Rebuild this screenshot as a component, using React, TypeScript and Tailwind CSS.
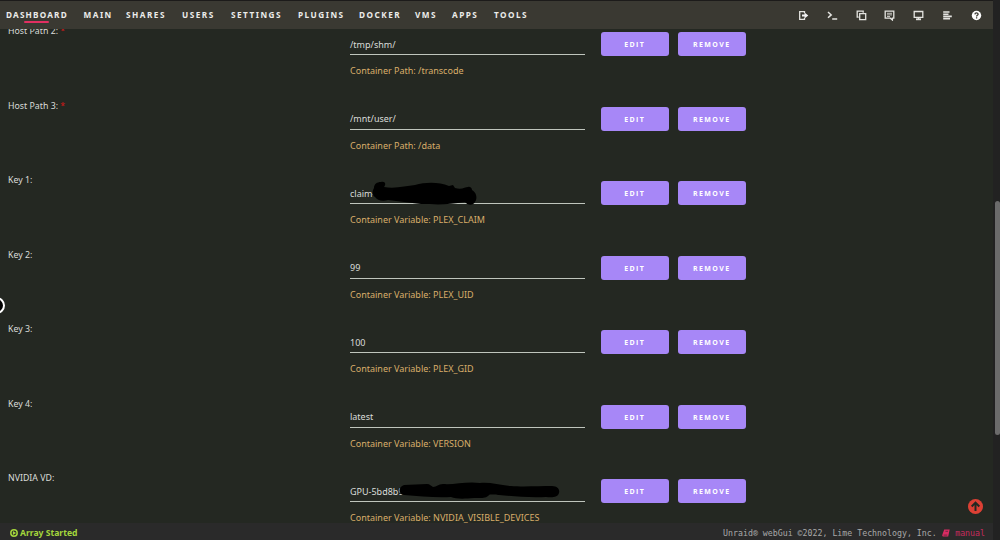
import { ReactNode } from "react";

type Field = {
  label: string;
  required?: boolean;
  value: string;
  help: string;
  redaction?: ReactNode;
};

const tabs = [
  { name: "DASHBOARD", width: "w-[77.5px] tracking-[1.2px]" },
  { name: "MAIN", width: "w-[42.5px]" },
  { name: "SHARES", width: "w-[56px]" },
  { name: "USERS", width: "w-[49px]" },
  { name: "SETTINGS", width: "w-[67px]" },
  { name: "PLUGINS", width: "w-[61px]" },
  { name: "DOCKER", width: "w-[56px]" },
  { name: "VMS", width: "w-[37px]" },
  { name: "APPS", width: "w-[42px]" },
  { name: "TOOLS", width: "w-[40px]" },
];

const fields: Field[] = [
  { label: "Host Path 2:", required: true, value: "/tmp/shm/", help: "Container Path: /transcode" },
  { label: "Host Path 3:", required: true, value: "/mnt/user/", help: "Container Path: /data" },
  {
    label: "Key 1:",
    value: "claim-",
    help: "Container Variable: PLEX_CLAIM",
    redaction: (
      <svg className="absolute -top-[5px] left-[22px]" width="106" height="26" viewBox="0 0 106 26">
        <path
          d="M2 7C2 3 5 1 9 1C14 0 14 4 12 6C23 8 34 5 43 4C54 1 67 1 77 5L81 4L83 7C90 9 93 6 96 6C99 5 100 8 100 9C104 11 106 17 103 21C101 25 95 24 93 21C80 23 67 24 58 23L49 23C37 22 27 20 16 19C10 21 5 19 3 16C0 14 0 10 2 7Z"
          fill="#000"
        />
      </svg>
    ),
  },
  { label: "Key 2:", value: "99", help: "Container Variable: PLEX_UID" },
  { label: "Key 3:", value: "100", help: "Container Variable: PLEX_GID" },
  { label: "Key 4:", value: "latest", help: "Container Variable: VERSION" },
  {
    label: "NVIDIA VD:",
    value: "GPU-5bd8b9",
    help: "Container Variable: NVIDIA_VISIBLE_DEVICES",
    redaction: (
      <svg className="absolute -top-[2px] left-[49px]" width="162" height="20" viewBox="0 0 162 20">
        <path
          d="M5 3L28 2C31 2 32 4 34 5C38 5 39 2 44 2C55 3 68-1 81 1C91 0 100 3 112 4C123 5 141 4 153 4C159 4 161 8 160 11C159 15 154 16 147 15C130 16 112 14 100 13C99 13 91 12 90 13C87 17 80 16 75 16C64 17 57 17 52 15C37 16 20 14 5 13C-1 12-1 5 5 3Z"
          fill="#000"
        />
      </svg>
    ),
  },
];

function Icon({ children }: { children: ReactNode }) {
  return (
    <svg width="11" height="11" viewBox="0 0 11 11" fill="none" stroke="#e4e4e0" strokeWidth="1.3">
      {children}
    </svg>
  );
}

function HeaderIcons() {
  return (
    <div className="flex items-center gap-[17.75px] pr-[11.5px]">
      <Icon>
        <path d="M6.5 3V1.6H1.7V9.4H6.5V8" />
        <path d="M4 4.6H6.5V2.6L10.3 5.5L6.5 8.4V6.4H4Z" fill="#f2f2f2" stroke="none" />
      </Icon>
      <Icon>
        <path d="M1 2L4.2 4.9L1 7.8M5.2 8.9H10.2" strokeWidth="1.5" />
      </Icon>
      <Icon>
        <path d="M3.7 3.7H9.7V9.7H3.7ZM2.7 7.2H1.2V1.2H7.2V2.7" />
      </Icon>
      <Icon>
        <path d="M1.2 1.2H9.8V8.2H8.4V10L6.3 8.2H1.2Z" />
        <path d="M3 3.3H8M3 4.9H8M3 6.5H6" strokeWidth="0.8" />
      </Icon>
      <Icon>
        <path d="M1.2 1.5H9.8V7.4H1.2ZM5.5 7.6V9.5" />
        <path d="M3 9.3H8" strokeWidth="1.8" />
      </Icon>
      <Icon>
        <path d="M1.2 2H7.5M1.2 4.2H6.5M1.2 6.4H9.8M1.2 8.6H8" strokeWidth="1.6" />
      </Icon>
      <Icon>
        <circle cx="5.5" cy="5.5" r="4.7" fill="#fff" stroke="none" />
        <path d="M3.9 4.4C4 2.4 7.1 2.5 7.1 4.2C7.1 5.3 5.6 5.3 5.6 6.5M5.6 7.3V8.5" stroke="#3a3932" />
      </Icon>
    </div>
  );
}

function ActionButton({ children }: { children: string }) {
  return (
    <button className="h-6 w-[67.5px] rounded-[3px] bg-[#a787f7] pt-px font-['Open_Sans',sans-serif] text-[7px] leading-[23px] font-bold tracking-[1.4px] text-white">
      {children}
    </button>
  );
}

function FieldRow({ field }: { field: Field }) {
  return (
    <div className="flex h-[74.5px] shrink-0 pl-2">
      <div className="w-[342px] text-[8.8px] leading-4">
        {field.label}
        {field.required && <span className="text-[#d01818]"> *</span>}
      </div>
      <div className="w-[236px] pt-[13.5px]">
        <div className="relative mr-px h-[18.5px] border-b border-[#bfc5bd] leading-4">
          {field.value}
          {field.redaction}
        </div>
        <div className="mt-2 leading-4 whitespace-nowrap text-[#d9ae6a]">{field.help}</div>
      </div>
      <div className="ml-[15px] flex gap-[9.5px] pt-[9.2px]">
        <ActionButton>EDIT</ActionButton>
        <ActionButton>REMOVE</ActionButton>
      </div>
    </div>
  );
}

export default function App() {
  return (
    <div className="relative flex h-[540px] w-[1000px] overflow-hidden bg-[#242424] font-['Noto_Sans',sans-serif] text-[9px] text-[#dadcd9]">
      <div className="flex w-[993px] flex-col">
        <header className="flex h-[29px] shrink-0 items-center justify-between border-t border-[#1c1b1a] bg-[#3a3932]">
          <nav className="flex pl-1.5 text-[8.2px] font-bold tracking-[1.5px] text-[#ececea]">
            {tabs.map((tab, i) => (
              <a key={tab.name} className={`relative ${tab.width}`}>
                {tab.name}
                {i === 0 && <span className="absolute bottom-[-1.5px] left-[18px] h-[1.5px] w-[25px] rounded-full bg-[#e32f62]" />}
              </a>
            ))}
          </nav>
          <HeaderIcons />
        </header>

        <main className="flex h-[494px] flex-col overflow-hidden bg-[#242822]">
          <div className="-mt-1.5">
            {fields.map((field) => (
              <FieldRow key={field.label} field={field} />
            ))}
          </div>
        </main>

        <footer className="flex h-[17px] items-center justify-between bg-[#2a2a2a] pt-[3px] pr-2 pl-2.5">
          <div className="flex items-center gap-[2px] text-[8.6px] font-bold text-[#a5d63c]">
            <svg width="8" height="8" viewBox="0 0 8 8">
              <circle cx="4" cy="4" r="3.2" fill="none" stroke="#a5d63c" strokeWidth="1.5" />
              <path d="M2.9 2.1L6.1 4L2.9 5.9Z" fill="#a5d63c" />
            </svg>
            Array Started
          </div>
          <div className="flex items-center font-['DejaVu_Sans_Mono',monospace] text-[8.25px] text-[#a8a8a8]">
            Unraid® webGui ©2022, Lime Technology, Inc.
            <svg className="mr-[5px] ml-[5.5px]" width="8" height="8" viewBox="0 0 8 8">
              <path d="M2.2 0.5H7.7L6.2 7.5H1.2C0 7.5 0 6.2 0.6 5Z" fill="#d92b63" />
              <path d="M3.4 2.3H6M1.6 6.1H5.3" stroke="#2a2a2a" strokeWidth="0.6" />
            </svg>
            <span className="text-[#c52a5d]">manual</span>
          </div>
        </footer>
      </div>

      <div className="w-[7px] bg-[#222222] pt-[201px] pl-[2px]">
        <div className="h-[234px] w-[5px] rounded-full bg-[#6b6b6b]" />
      </div>

      <div className="absolute top-[297px] -left-[12px] size-[17px] rounded-full border-2 border-white bg-black" />
      <svg className="absolute top-[499px] left-[968px]" width="15" height="15" viewBox="0 0 15 15">
        <circle cx="7.5" cy="7.5" r="7.5" fill="#dc4034" />
        <path d="M7.5 12V4M3.7 7.5L7.5 3.6L11.3 7.5" fill="none" stroke="#242822" strokeWidth="2" />
      </svg>
    </div>
  );
}
